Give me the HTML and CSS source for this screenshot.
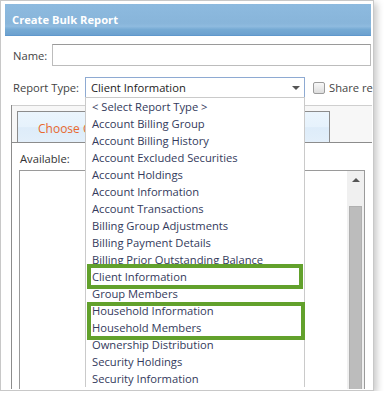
FILE: index.html
```html
<!DOCTYPE html>
<html>
<head>
  <title>Create Bulk Report</title>
  <link rel="stylesheet" href="styles.css">
</head>
<body>

<div class="dialog">
  <div class="titlebar">Create Bulk Report</div>

  <div class="row name-row">
    <span class="label">Name:</span>
    <div class="input"></div>
  </div>

  <div class="row type-row">
    <span class="label">Report Type:</span>
    <div class="select">Client Information<span class="arrow"></span></div>
    <span class="check"></span>
    <span class="share">Share report with users</span>
  </div>

  <div class="panel">
    <div class="tabs">
      <div class="tab">Choose Clients</div>
    </div>
    <div class="panel-body">
      <div class="avail">Available:</div>
      <div class="listbox">
        <div class="scrollbar">
          <div class="up"><span class="up-arrow"></span></div>
          <div class="thumb"></div>
        </div>
      </div>
    </div>
  </div>

  <ul class="dropdown">
    <li>&lt; Select Report Type &gt;</li>
    <li>Account Billing Group</li>
    <li>Account Billing History</li>
    <li>Account Excluded Securities</li>
    <li>Account Holdings</li>
    <li>Account Information</li>
    <li>Account Transactions</li>
    <li>Billing Group Adjustments</li>
    <li>Billing Payment Details</li>
    <li>Billing Prior Outstanding Balance</li>
    <li>Client Information</li>
    <li>Group Members</li>
    <li>Household Information</li>
    <li>Household Members</li>
    <li>Ownership Distribution</li>
    <li>Security Holdings</li>
    <li>Security Information</li>
  </ul>

  <div class="mark mark-client"></div>
  <div class="mark mark-household"></div>
</div>

</body>
</html>
```

FILE: styles.css
```css
* {
  box-sizing: border-box;
}

html, body {
  margin: 0;
  padding: 0;
  background: #fff;
}

body {
  font-family: "Open Sans", sans-serif;
  font-size: 11.2px;
  color: #444;
}

.dialog {
  position: relative;
  width: 374px;
  height: 391px;
  border: 1px solid #c8c8c8;
  background: #fff;
  box-shadow: 3px 3px 7px rgba(0, 0, 0, 0.22);
  overflow: hidden;
}

.titlebar {
  margin: 3px 2px 0 4px;
  height: 32px;
  padding-left: 7px;
  display: flex;
  align-items: center;
  color: #fff;
  font-weight: bold;
  font-size: 11.2px;
  border-bottom: 1px solid #5f98cc;
  background: linear-gradient(#8dbadf 0%, #88b5da 62%, #8fbbdf 72%, #76aad4 82%, #6ca1cf 100%);
}

.row {
  display: flex;
  align-items: center;
  padding-left: 12px;
}

.label {
  flex: none;
  white-space: nowrap;
}

.name-row {
  margin-top: 8px;
  height: 22px;
}

.name-row .label {
  width: 39px;
}

.input {
  flex: none;
  width: 319px;
  height: 22px;
  border: 1px solid #bcbcbc;
  border-top-color: #9a9a9a;
}

.type-row {
  margin-top: 11px;
  height: 21px;
}

.type-row .label {
  width: 72px;
}

.select {
  flex: none;
  width: 220px;
  height: 21px;
  padding: 0 4px 0 5px;
  display: flex;
  align-items: center;
  justify-content: space-between;
  border: 1px solid #8eaad2;
  color: #222;
}

.arrow {
  width: 0;
  height: 0;
  border-left: 4px solid transparent;
  border-right: 4px solid transparent;
  border-top: 4px solid #555;
}

.check {
  flex: none;
  width: 12px;
  height: 12px;
  margin-left: 8px;
  border: 1px solid #9c9c9c;
  border-radius: 2px;
  background: linear-gradient(#f8f8f8, #dddddd);
}

.share {
  flex: none;
  margin-left: 4px;
  white-space: nowrap;
  color: #444;
}

.panel {
  margin: 7px 0 0 10px;
  width: 361px;
  border-left: 1px solid #8c8c8c;
}

.tabs {
  height: 38px;
  padding: 5px 0 0 5px;
  border-top: 1px solid #cfcfcf;
  border-bottom: 1px solid #8c8c8c;
  background: #f7f7f7;
}

.tab {
  width: 313px;
  height: 31px;
  padding: 2px 0 0 20px;
  display: flex;
  align-items: center;
  border: 1px solid #8c8c8c;
  border-bottom: none;
  color: #e8692e;
  font-size: 12px;
  background: linear-gradient(#ebf5fd 0%, #e6f2fc 50%, #ddecf9 52%, #e3effa 100%);
}

.panel-body {
  height: 246px;
  padding: 7px 0 0 7px;
  overflow: hidden;
}

.avail {
  padding-left: 1px;
  line-height: 17px;
  color: #333;
}

.listbox {
  margin-top: 3px;
  width: 346px;
  height: 300px;
  display: flex;
  justify-content: flex-end;
  border: 1px solid #9a9a9a;
}

.scrollbar {
  width: 17px;
  padding: 0 2px;
  background: #f0f0f0;
}

.up {
  height: 17px;
  display: flex;
  align-items: center;
  justify-content: center;
}

.up-arrow {
  width: 0;
  height: 0;
  border-left: 4px solid transparent;
  border-right: 4px solid transparent;
  border-bottom: 4px solid #555;
}

.thumb {
  margin-top: 18px;
  width: 13px;
  height: 260px;
  background: #bcbcbc;
  border: 1px solid #b0b0b0;
}

.dropdown {
  position: absolute;
  left: 84px;
  top: 96px;
  width: 220px;
  margin: 0;
  padding: 0;
  list-style: none;
  background: #fff;
  border: 1px solid #cacaca;
  border-bottom: none;
  color: #333a5c;
}

.dropdown li {
  height: 17px;
  line-height: 17px;
  padding-left: 6px;
  white-space: nowrap;
}

.mark {
  position: absolute;
  border: 4px solid #62a12c;
}

.mark-client {
  left: 86px;
  top: 263px;
  width: 216px;
  height: 25px;
}

.mark-household {
  left: 86px;
  top: 301px;
  width: 218px;
  height: 38px;
}
```
